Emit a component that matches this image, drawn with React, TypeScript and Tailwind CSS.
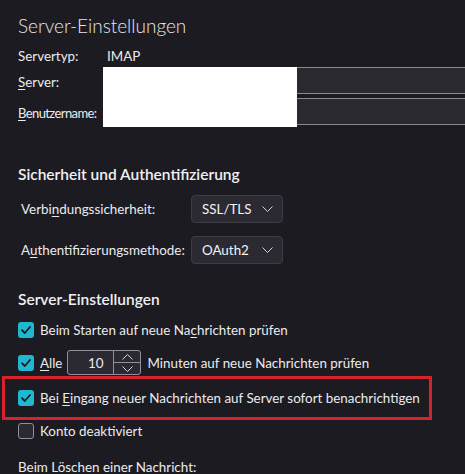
import React from "react";

const U = ({ children }: { children: React.ReactNode }) => (
  <span className="underline underline-offset-[2px]">{children}</span>
);

const Check = ({ checked }: { checked: boolean }) =>
  checked ? (
    <span className="w-[16px] h-[16px] rounded-[3px] bg-[#20b8d0] flex items-center justify-center shrink-0">
      <svg width="12" height="12" viewBox="0 0 12 12" fill="none">
        <path d="M2 6.2 L4.8 9 L10 3" stroke="#1c1b22" strokeWidth="1.8" strokeLinecap="round" strokeLinejoin="round" />
      </svg>
    </span>
  ) : (
    <span className="w-[16px] h-[16px] rounded-[3px] border border-[#8f8f9d] bg-[#2b2a33] shrink-0" />
  );

const Chevron = ({ up = false }: { up?: boolean }) => (
  <svg width="11" height="6" viewBox="0 0 11 6" fill="none" className={up ? "rotate-180" : ""}>
    <path d="M0.5 0.5 L5.5 5.5 L10.5 0.5" stroke="#d6d6da" strokeWidth="1" />
  </svg>
);

const Select = ({ value }: { value: string }) => (
  <div className="w-[92px] h-[28px] rounded-[4px] bg-[#2b2a33] border border-[#3d3c45] flex items-center justify-between pl-[10px] pr-[9px] text-[#f3f3f5]">
    <span>{value}</span>
    <Chevron />
  </div>
);

export default function App() {
  return (
    <div
      className="relative w-[465px] h-[474px] overflow-hidden bg-[#1c1b22] text-[#ebebee] text-[13.4px] leading-[20px]"
      style={{ fontFamily: 'Lato, "Noto Sans", sans-serif' }}
    >
      <div className="pl-[18px]">
        <div className="pt-[12px] text-[19px] leading-[28px] font-light text-[#e6e6ea]">Server-Einstellungen</div>

        <div className="mt-[6px] flex">
          <span className="w-[89px]">Servertyp:</span>
          <span>IMAP</span>
        </div>

        <div className="mt-[1px] flex items-center h-[27px]">
          <span className="w-[85px] pt-[3px]">
            <U>S</U>erver:
          </span>
          <div className="flex-1 h-[27px] bg-[#2a2a2e] border-y border-[#8a8a92]" />
        </div>
        <div className="mt-[4px] flex items-center h-[27px]">
          <span className="w-[85px] pt-[3px] whitespace-nowrap text-[13px] tracking-[-0.6px]">
            <U>B</U>enutzername:
          </span>
          <div className="flex-1 h-[27px] bg-[#2a2a2e] border-y border-[#8a8a92]" />
        </div>

        <div className="mt-[38px] text-[15.5px] leading-[22px] font-semibold text-[#f0f0f3]">
          Sicherheit und Authentifizierung
        </div>

        <div className="mt-[10px] grid grid-cols-[170px_auto] gap-y-[13px] items-center pl-[3px]">
          <span>
            Verbi<U>n</U>dungssicherheit:
          </span>
          <Select value="SSL/TLS" />
          <span>
            A<U>u</U>thentifizierungsmethode:
          </span>
          <Select value="OAuth2" />
        </div>

        <div className="mt-[24px] text-[15.5px] leading-[22px] font-semibold text-[#f0f0f3]">Server-Einstellungen</div>

        <div className="mt-[10px] flex items-center gap-[6px] h-[20px]">
          <Check checked />
          <span>
            Beim Starten auf neue Na<U>c</U>hrichten prüfen
          </span>
        </div>

        <div className="mt-[10px] flex items-center h-[25px]">
          <Check checked />
          <span className="ml-[6px]">
            <U>A</U>lle
          </span>
          <div className="ml-[5px] w-[74px] h-[25px] rounded-[3px] border border-[#8f8f9d] bg-[#2b2a33] flex">
            <div className="flex-1 flex items-center justify-end pr-[10px]">10</div>
            <div className="w-[27px] border-l border-[#8f8f9d] flex flex-col">
              <div className="flex-1 flex items-center justify-center border-b border-[#8f8f9d]">
                <Chevron up />
              </div>
              <div className="flex-1 flex items-center justify-center">
                <Chevron />
              </div>
            </div>
          </div>
          <span className="ml-[6px]">Minuten auf neue Nachrichten prüfen</span>
        </div>

        <div className="mt-[1px] -ml-[16px] w-[430px] h-[44px] border-[3px] border-[#d7212c] flex items-center pl-[13px] gap-[6px]">
          <Check checked />
          <span className="whitespace-nowrap">
            Bei <U>E</U>ingang neuer Nachrichten auf Server sofort benachrichtigen
          </span>
        </div>

        <div className="mt-[0px] flex items-center gap-[6px] h-[22px]">
          <Check checked={false} />
          <span>Konto deaktiviert</span>
        </div>

        <div className="mt-[15px]">Beim Löschen einer Nachricht:</div>
      </div>

      <div className="absolute left-[103px] top-[67px] w-[194px] h-[60px] bg-white" />
    </div>
  );
}
